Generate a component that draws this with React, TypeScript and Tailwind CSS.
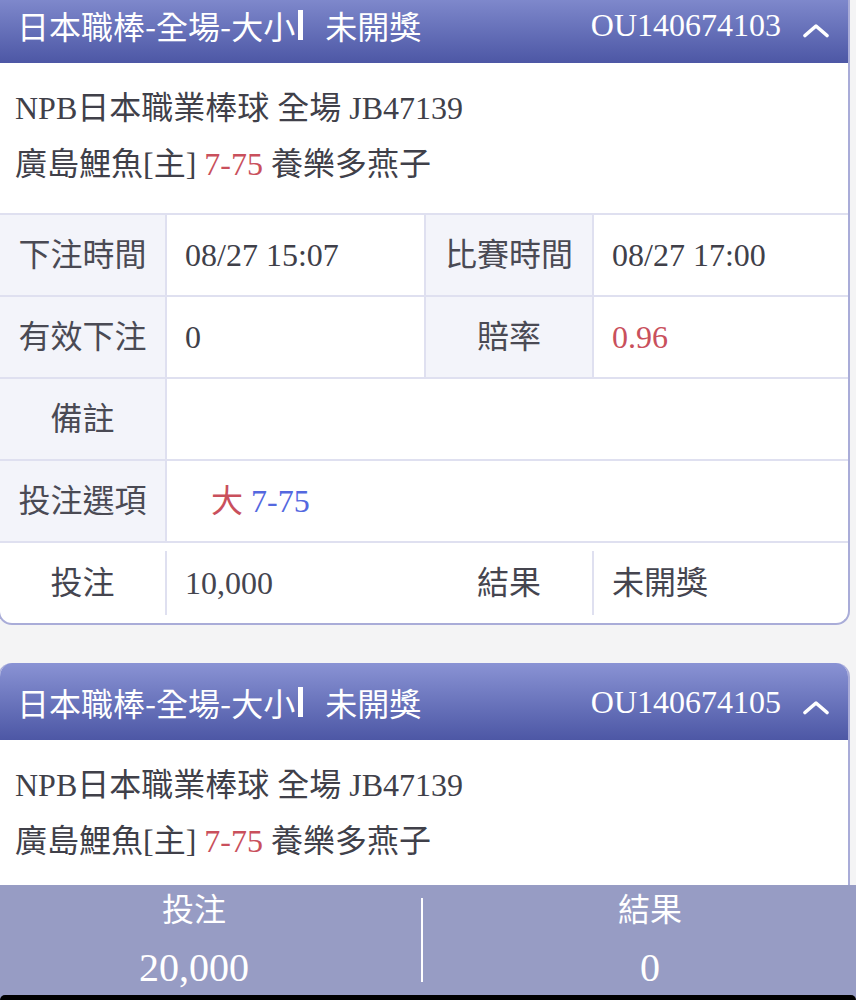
import { ReactNode } from 'react'

const font = "font-['Liberation_Serif','Noto_Sans_CJK_TC',serif]"

type Bet = {
  id: string
  league: string
  home: string
  line: string
  away: string
}

function Chevron() {
  return (
    <svg width="28" height="15" viewBox="0 0 28 15" className="mt-[12px] ml-[21px] shrink-0">
      <polyline points="3,12.5 14,3 25,12.5" fill="none" stroke="white" strokeWidth="3.6" strokeLinecap="round" strokeLinejoin="round" />
    </svg>
  )
}

function CardHeader({ id }: { id: string }) {
  return (
    <div className="h-[77px] flex items-center pl-[17px] pr-[18px] bg-gradient-to-b from-[#8a93d4] to-[#4d57a5] text-white">
      <span className="text-[32px] font-['Noto_Sans_CJK_TC',sans-serif] leading-none">日本職棒-全場-大小</span>
      <span className="inline-block w-[5px] h-[30px] bg-white ml-[3px] mr-[22px]" />
      <span className="text-[32px] font-['Noto_Sans_CJK_TC',sans-serif] leading-none">未開獎</span>
      <span className="ml-auto text-[32px] leading-none">{id}</span>
      <Chevron />
    </div>
  )
}

function MatchInfo({ bet }: { bet: Bet }) {
  return (
    <div className="pt-[17px] pb-[21px] pl-[15px] text-[32px] leading-[56px] text-[#404049]">
      <div>{bet.league}</div>
      <div>
        {bet.home} <span className="text-[#c9505c]">{bet.line}</span> {bet.away}
      </div>
    </div>
  )
}

function Label({ children, w = 'w-[167px]' }: { children: ReactNode; w?: string }) {
  return (
    <div className={`${w} shrink-0 border-r-2 border-[#dfe0f0] bg-[#f3f4fa] flex items-center justify-center text-[#4a4a54]`}>
      {children}
    </div>
  )
}

function Row({ children }: { children: ReactNode }) {
  return <div className="h-[82px] flex border-t-2 border-[#dfe0f0] text-[32px]">{children}</div>
}

export default function App() {
  const bets: Bet[] = [
    { id: 'OU140674103', league: 'NPB日本職業棒球 全場 JB47139', home: '廣島鯉魚[主]', line: '7-75', away: '養樂多燕子' },
    { id: 'OU140674105', league: 'NPB日本職業棒球 全場 JB47139', home: '廣島鯉魚[主]', line: '7-75', away: '養樂多燕子' },
  ]

  return (
    <div className={`relative w-[856px] h-[1000px] overflow-hidden bg-[#f4f4f5] ${font}`}>
      {/* expanded card */}
      <div className="-mt-[14px] -ml-[2px] w-[852px] bg-white border-x-2 border-b-2 border-[#a9acd8] rounded-[14px] overflow-hidden">
        <CardHeader id={bets[0].id} />
        <MatchInfo bet={bets[0]} />
        <Row>
          <Label>下注時間</Label>
          <div className="w-[259px] shrink-0 border-r-2 border-[#dfe0f0] flex items-center pl-[18px] text-[#404049]">08/27 15:07</div>
          <Label w="w-[168px]">比賽時間</Label>
          <div className="flex-1 flex items-center pl-[18px] text-[#404049]">08/27 17:00</div>
        </Row>
        <Row>
          <Label>有效下注</Label>
          <div className="w-[259px] shrink-0 border-r-2 border-[#dfe0f0] flex items-center pl-[18px] text-[#404049]">0</div>
          <Label w="w-[168px]">賠率</Label>
          <div className="flex-1 flex items-center pl-[18px] text-[#c9505c]">0.96</div>
        </Row>
        <Row>
          <Label>備註</Label>
          <div className="flex-1" />
        </Row>
        <Row>
          <Label>投注選項</Label>
          <div className="flex-1 flex items-center pl-[44px]">
            <span className="text-[#c9505c]">大</span>
            <span className="ml-[8px] text-[#5468df]">7-75</span>
          </div>
        </Row>
        <div className="h-[82px] flex border-t-2 border-[#dfe0f0] py-[8px] text-[32px] text-[#45454f]">
          <div className="w-[167px] shrink-0 border-r-2 border-[#dfe0f0] flex items-center justify-center">投注</div>
          <div className="w-[259px] shrink-0 flex items-center pl-[18px]">10,000</div>
          <div className="w-[168px] shrink-0 border-r-2 border-[#dfe0f0] flex items-center justify-center">結果</div>
          <div className="flex-1 flex items-center pl-[18px]">未開獎</div>
        </div>
      </div>

      {/* second card, runs under the summary bar */}
      <div className="mt-[38px] -ml-[2px] w-[852px] bg-white border-x-2 border-[#a9acd8] rounded-t-[14px] overflow-hidden">
        <CardHeader id={bets[1].id} />
        <MatchInfo bet={bets[1]} />
        <div className="h-[120px]" />
      </div>

      {/* summary bar */}
      <div className="absolute left-0 right-0 bottom-0 bg-[#979cc4]">
        <div className="h-[110px] flex text-white">
          <div className="w-[388px] shrink-0 flex flex-col items-center pt-[5px]">
            <div className="text-[32px] leading-[40px]">投注</div>
            <div className="mt-[14px] text-[40px] leading-[48px]">20,000</div>
          </div>
          <div className="ml-[33px] w-[2px] h-[84px] self-center bg-white" />
          <div className="flex-1 flex flex-col items-center pt-[5px] pl-[21px]">
            <div className="text-[32px] leading-[40px]">結果</div>
            <div className="mt-[14px] text-[40px] leading-[48px]">0</div>
          </div>
        </div>
        <div className="h-[5px] bg-black rounded-t-[12px]" />
      </div>
    </div>
  )
}
